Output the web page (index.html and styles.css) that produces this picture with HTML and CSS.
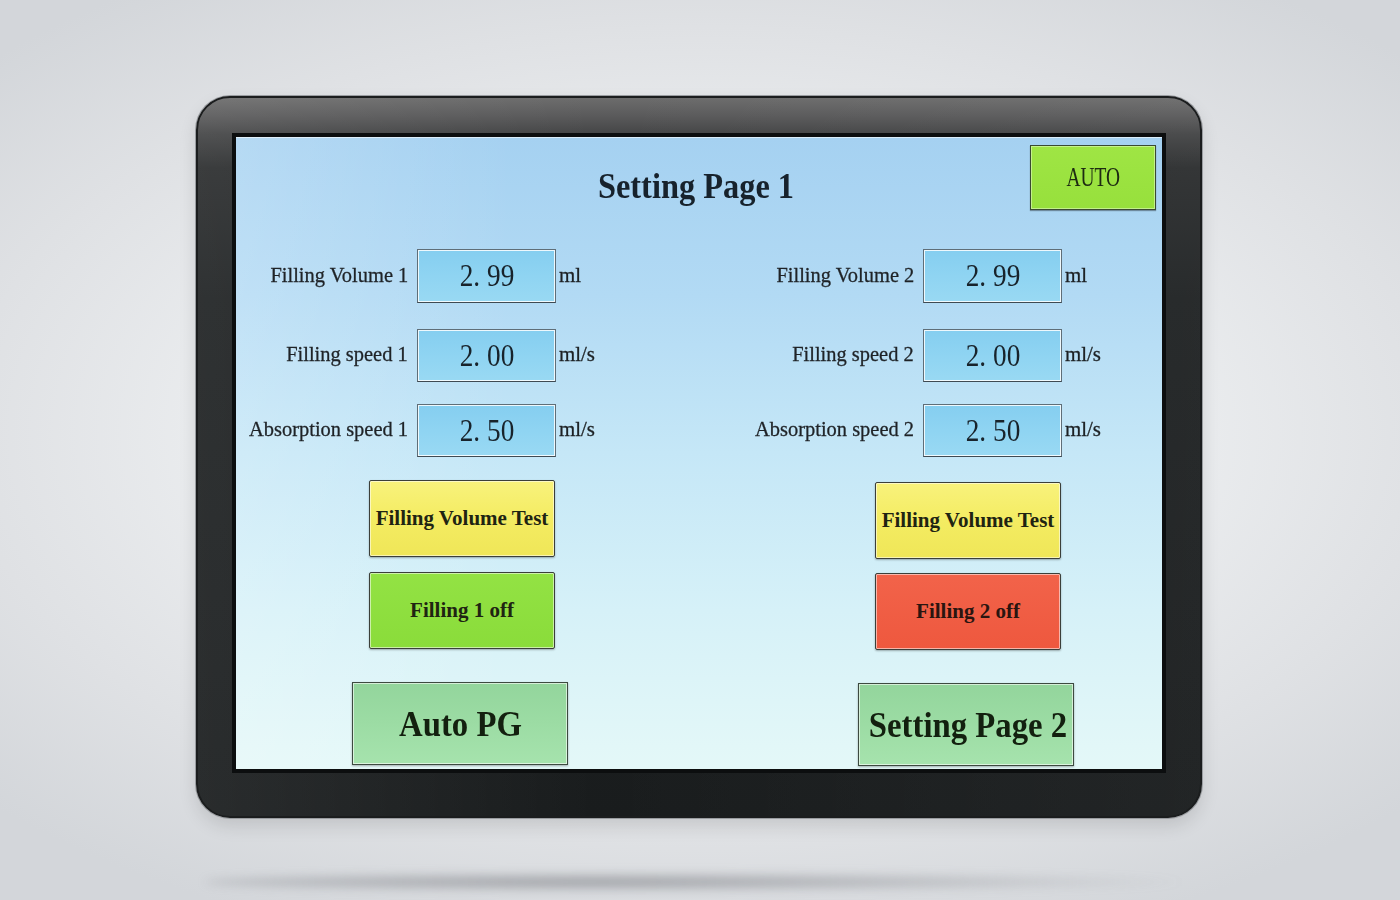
FILE: index.html
```html
<!DOCTYPE html>
<html lang="en">
<head>
<meta charset="utf-8">
<title>Setting Page 1</title>
<link rel="stylesheet" href="styles.css">
</head>
<body>
<div class="stage">
  <div class="monitor">
    <div class="screen">
      <header class="head">
        <div class="head-spacer"></div>
        <h1 class="title"><span class="c">Setting Page 1</span></h1>
        <button class="auto"><span class="c">AUTO</span></button>
      </header>
      <div class="panels">
        <section class="panel">
          <div class="row r1">
            <span class="label"><span class="c">Filling Volume 1</span></span>
            <span class="field"><span class="c">2. 99</span></span>
            <span class="unit"><span class="c">ml</span></span>
          </div>
          <div class="row r2">
            <span class="label"><span class="c">Filling speed 1</span></span>
            <span class="field"><span class="c">2. 00</span></span>
            <span class="unit"><span class="c">ml/s</span></span>
          </div>
          <div class="row r3">
            <span class="label"><span class="c">Absorption speed 1</span></span>
            <span class="field"><span class="c">2. 50</span></span>
            <span class="unit"><span class="c">ml/s</span></span>
          </div>
          <button class="btn yellow"><span class="c">Filling Volume Test</span></button>
          <button class="btn green"><span class="c">Filling 1 off</span></button>
          <button class="big"><span class="c">Auto PG</span></button>
        </section>
        <section class="panel">
          <div class="row r1">
            <span class="label"><span class="c">Filling Volume 2</span></span>
            <span class="field"><span class="c">2. 99</span></span>
            <span class="unit"><span class="c">ml</span></span>
          </div>
          <div class="row r2">
            <span class="label"><span class="c">Filling speed 2</span></span>
            <span class="field"><span class="c">2. 00</span></span>
            <span class="unit"><span class="c">ml/s</span></span>
          </div>
          <div class="row r3">
            <span class="label"><span class="c">Absorption speed 2</span></span>
            <span class="field"><span class="c">2. 50</span></span>
            <span class="unit"><span class="c">ml/s</span></span>
          </div>
          <button class="btn yellow shift"><span class="c">Filling Volume Test</span></button>
          <button class="btn red"><span class="c">Filling 2 off</span></button>
          <button class="big"><span class="c">Setting Page 2</span></button>
        </section>
      </div>
    </div>
  </div>
  <div class="floor-shadow"></div>
</div>
</body>
</html>
```

FILE: styles.css
```css
html, body {
  margin: 0;
  padding: 0;
}
body {
  width: 1400px;
  height: 900px;
  overflow: hidden;
  font-family: "Liberation Serif", "Times New Roman", serif;
  background:
    radial-gradient(ellipse 70% 60% at 50% 48%, #f6f7f8 0%, #eceef0 45%, #dfe1e4 75%, #d3d6da 100%);
}
.stage {
  padding-top: 96px;
  padding-left: 196px;
}
.c {
  display: inline-block;
  white-space: nowrap;
}
.monitor {
  width: 937px;
  border: 2px solid #1b1d1e;
  border-radius: 34px;
  padding: 35px 31px 43px 34px;
  background:
    linear-gradient(90deg, rgba(255,255,255,0.07) 0%, rgba(255,255,255,0) 40%, rgba(255,255,255,0.04) 100%),
    linear-gradient(180deg, #6c6c6c 0px, #5a5a5b 18px, #444546 36px, #2c2e2f 70px, #202324 200px, #191c1d 100%);
  box-shadow: 0 0 0 1px #9a9da1, 0 8px 18px rgba(0,0,0,0.12);
}
.screen {
  width: 926px;
  height: 632px;
  border: 4px solid #0c0e0f;
  padding: 0;
  box-sizing: content-box;
  background:
    linear-gradient(90deg, rgba(255,255,255,0.18) 0%, rgba(255,255,255,0) 30%),
    linear-gradient(180deg, #a5d1f1 0%, #b2daf4 25%, #c5e7f7 50%, #d6f1f8 75%, #e4f8f8 100%);
  box-shadow: inset 0 1px 0 rgba(255,255,255,0.6);
}
.head {
  display: grid;
  grid-template-columns: 1fr auto 1fr;
  padding: 8px 6px 0 0;
  height: 65px;
}
.title {
  margin: 21px 0 0 0;
  align-self: start;
  font-size: 36px;
  line-height: 40px;
  font-weight: bold;
  color: #17222c;
}
.title .c { transform: scaleX(0.9); }
.auto {
  justify-self: end;
  width: 126px;
  height: 65px;
  margin: 0;
  padding: 0;
  font-family: inherit;
  font-size: 27px;
  color: #1d2a12;
  background: linear-gradient(180deg, #9fe544 0%, #97e03c 100%);
  border: 1px solid #3a4a30;
  box-shadow: inset 0 0 0 1px rgba(230,255,200,0.55), 0 1px 1px rgba(0,0,0,0.35);
}
.auto .c { transform: scaleX(0.72); }
.panels {
  display: grid;
  grid-template-columns: 506px 1fr;
}
.panel {
  display: flex;
  flex-direction: column;
  align-items: flex-start;
}
.row {
  display: grid;
  grid-template-columns: 172px 148px auto;
  align-items: center;
}
.r1 { margin-top: 39px; height: 54px; }
.r2 { margin-top: 26px; height: 53px; }
.r3 { margin-top: 22px; height: 53px; }
.label {
  text-align: right;
  font-size: 22px;
  color: #1f2327;
  padding-bottom: 3px;
  -webkit-text-stroke: 0.3px #1f2327;
}
.label .c { transform: scaleX(0.93); transform-origin: right center; }
.field {
  margin-left: 9px;
  height: 100%;
  box-sizing: border-box;
  display: flex;
  align-items: center;
  justify-content: center;
  font-size: 31px;
  color: #18232b;
  background: linear-gradient(180deg, #85cef0 0%, #8fd4f2 50%, #99d9f3 100%);
  border: 1px solid #5f6e78;
  border-bottom-color: #3f4a52;
  box-shadow: inset 0 0 0 1px rgba(255,255,255,0.85);
}
.field .c { transform: scaleX(0.88); }
.unit {
  margin-left: 3px;
  font-size: 22px;
  color: #1d2124;
  padding-bottom: 3px;
  -webkit-text-stroke: 0.3px #1d2124;
}
.unit .c { transform: scaleX(0.95); transform-origin: left center; }
.btn {
  width: 186px;
  height: 77px;
  margin: 0 0 0 133px;
  padding: 0;
  font-family: inherit;
  font-size: 21px;
  font-weight: bold;
  color: #1f2412;
  border: 1px solid #3b3f3a;
  border-radius: 2px;
  box-shadow: inset 0 0 0 1px rgba(255,255,255,0.55), 0 1px 2px rgba(0,0,0,0.3);
}
.btn .c { transform: scaleX(1); }
.yellow {
  margin-top: 23px;
  background: linear-gradient(180deg, #f8f27c 0%, #f4ec62 50%, #efe658 100%);
}
.yellow.shift { margin-top: 25px; }
.green {
  margin-top: 15px;
  background: linear-gradient(180deg, #93e244 0%, #8adc3a 100%);
}
.red {
  margin-top: 14px;
  color: #2a1510;
  background: linear-gradient(180deg, #f2634a 0%, #ee583e 100%);
}
.big {
  width: 216px;
  height: 83px;
  margin: 33px 0 0 116px;
  padding: 0;
  font-family: inherit;
  font-size: 36px;
  font-weight: bold;
  color: #13200f;
  border: 1px solid #3d4a40;
  background: linear-gradient(180deg, #93d59c 0%, #9cdca4 50%, #a6e3ad 100%);
  box-shadow: inset 0 0 0 1px rgba(255,255,255,0.6), 0 1px 2px rgba(0,0,0,0.3);
}
.big .c { transform: scaleX(0.91); }
.floor-shadow {
  width: 980px;
  height: 20px;
  margin-top: 54px;
  margin-left: 8px;
  border-radius: 50%;
  background: radial-gradient(ellipse at 40% 50%, rgba(90,92,98,0.5) 0%, rgba(120,122,128,0.25) 45%, rgba(150,152,158,0) 72%);
  filter: blur(5px);
}
```
